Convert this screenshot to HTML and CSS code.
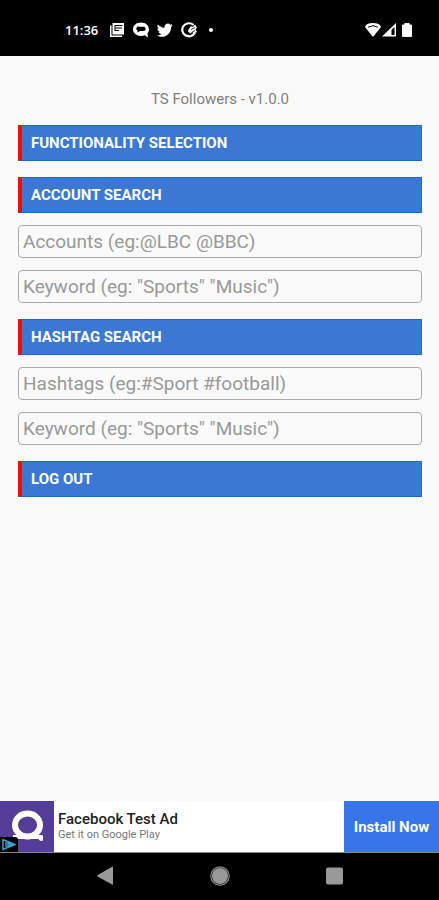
FILE: index.html
```html
<!DOCTYPE html>
<html lang="en">
<head>
<meta charset="utf-8">
<meta name="viewport" content="width=device-width, initial-scale=1">
<title>TS Followers</title>
<link rel="stylesheet" href="styles.css">
</head>
<body>
<header class="status">
  <div class="status-left">
    <span class="clock">11:36</span>
    <svg width="16" height="16" viewBox="0 0 16 16" aria-hidden="true"><path fill="#fff" d="M3.500 1H15v11.500H3.500zM1 3.500h1.500v10H13V15H1z"/><path stroke="#000" d="M6 3.500h7.500M6 6h7M6 8.500h4M6 3v6"/></svg>
    <svg width="18" height="16" viewBox="0 0 18 16" aria-hidden="true"><path fill="#fff" d="M9 .5C4.500.500 1 3.400 1 7.300s3.500 6.700 8 6.700c1.400 0 2.800-.3 4-.8l3 2.300-.5-4.200c1-1 1.500-2.500 1.500-4C17 3.400 13.500.500 9 .500z"/><path d="M7 4.800h4.500a2 2 0 0 1 0 4.200H8L5.500 10.500V8.600A2 2 0 0 1 7 4.800z"/></svg>
    <svg width="16" height="16" viewBox="0 0 24 24" aria-hidden="true"><path fill="#fff" d="M23.600 4.900c-.9.400-1.800.7-2.800.8 1-.6 1.800-1.600 2.100-2.700-.9.600-2 1-3.100 1.200A4.900 4.900 0 0 0 11.400 8.700C7.300 8.500 3.700 6.500 1.300 3.600c-1.300 2.200-.7 5.100 1.500 6.600-.8 0-1.600-.2-2.200-.6 0 2.300 1.600 4.400 3.900 4.900-.7.200-1.500.2-2.200.1.600 2 2.400 3.400 4.600 3.400A9.900 9.900 0 0 1-.4 20c2.200 1.400 4.800 2.200 7.500 2.200 9.100 0 14.300-7.700 14-14.600 1-.7 1.800-1.600 2.500-2.700z"/></svg>
    <svg width="18" height="16" viewBox="0 0 18 16" aria-hidden="true"><path fill="none" stroke="#fff" stroke-width="2.200" d="M13.500 3A6.700 6.500 0 1 0 15 10.500"/><path fill="#fff" d="M8.500 7.500 11 4l1.500 1L15 2.500l2 3-1.500 2L17 10l-3 1.500-2-1.500-1.500 1.500-2.500-2z"/><path stroke="#000" stroke-width=".8" d="M11 7.500l4-2M12 10l3-1.500"/></svg>
    <span class="dot"></span>
  </div>
  <div class="status-right">
    <svg width="16" height="16" viewBox="0 0 16 16" aria-hidden="true"><path fill="#fff" d="M0 5Q1 1 8 1t8 4L8 15z"/><path fill="none" stroke="#000" d="M3 5.200Q8 2.200 13 5.200"/></svg>
    <svg width="16" height="16" viewBox="0 0 16 16" aria-hidden="true"><path fill="#fff" d="M15 1v13.500H1z"/><path d="M13.500 5v8h-3V8z"/></svg>
    <svg class="battery" width="12" height="16" viewBox="0 0 12 16" aria-hidden="true"><path fill="#fff" d="M3.500 1h5v1.500H10q1 0 1 1V14q0 1-1 1H2q-1 0-1-1V3.500q0-1 1-1h1.500z"/></svg>
  </div>
</header>

<main class="content">
  <h1 class="title">TS Followers - v1.0.0</h1>
  <button class="bar" type="button">FUNCTIONALITY SELECTION</button>
  <form class="group">
    <button class="bar" type="button">ACCOUNT SEARCH</button>
    <input class="field" type="text" aria-label="Accounts" placeholder="Accounts (eg:@LBC @BBC)">
    <input class="field" type="text" aria-label="Account keyword" placeholder='Keyword (eg: "Sports" "Music")'>
  </form>
  <form class="group">
    <button class="bar" type="button">HASHTAG SEARCH</button>
    <input class="field" type="text" aria-label="Hashtags" placeholder="Hashtags (eg:#Sport #football)">
    <input class="field" type="text" aria-label="Hashtag keyword" placeholder='Keyword (eg: "Sports" "Music")'>
  </form>
  <button class="bar" type="button">LOG OUT</button>
</main>

<aside class="ad">
  <div class="ad-logo">
    <svg width="54" height="51" viewBox="0 0 54 51" aria-hidden="true"><ellipse cx="27.500" cy="24" rx="12.500" ry="11.500" fill="none" stroke="#fff" stroke-width="6"/><path fill="#fff" d="M13 34h29q1 0 1 2v3q0 1-1.500 1-2 0-3-2H17q-1 2-3 2-1 0-1-2z"/></svg>
    <svg class="ad-mark" width="18" height="15" viewBox="0 0 18 15" aria-hidden="true"><path d="M0 0h15q3 0 3 3v12H0z"/><path fill="none" stroke="#35a9d6" stroke-width="1.400" d="M3 2.500v10L15 7.500zM6 5v5M8 6l3.500 1.500L8 9.500z"/></svg>
  </div>
  <div class="ad-text">
    <strong>Facebook Test Ad</strong>
    <span>Get it on Google Play</span>
  </div>
  <button class="install" type="button">Install Now</button>
</aside>

<nav class="nav" aria-label="System">
  <button type="button" aria-label="Back"><svg width="20" height="20" viewBox="0 0 20 20"><path fill="#999" d="M18 1v17q0 1-1 .5L2.500 10.500q-1-.7 0-1.300L17 .7q1-.5 1 .3z"/></svg></button>
  <button type="button" aria-label="Home"><svg width="20" height="20" viewBox="0 0 20 20"><circle cx="10" cy="10" r="9.200" fill="none" stroke="#888" stroke-width="1.200"/><circle cx="10" cy="10" r="8" fill="#999"/></svg></button>
  <button type="button" aria-label="Recent apps"><svg width="20" height="20" viewBox="0 0 20 20"><rect x="1" y="1.500" width="17" height="17" rx="2" fill="#999"/></svg></button>
</nav>
</body>
</html>
```
FILE: styles.css
```css
* {
  box-sizing: border-box;
}

body {
  margin: 0;
  min-height: 100vh;
  display: flex;
  flex-direction: column;
  background: #fafafa;
  font-family: Roboto, "Liberation Sans", sans-serif;
}

button {
  border: 0;
  margin: 0;
  font-family: inherit;
  cursor: pointer;
}

svg {
  display: block;
}

.status {
  height: 56px;
  padding: 4px 26px 0 65px;
  display: flex;
  align-items: center;
  justify-content: space-between;
  background: #000;
  color: #fff;
}

.status-left {
  display: flex;
  align-items: center;
  gap: 7px;
}

.clock {
  margin-right: 4px;
  font: 600 13px/16px "Open Sans", Roboto, sans-serif;
}

.dot {
  width: 4px;
  height: 4px;
  margin-left: 4px;
  border-radius: 50%;
  background: #fff;
}

.status-right {
  display: flex;
  align-items: center;
}

.battery {
  margin-left: 4px;
}

.content {
  flex: 1;
  padding: 34px 17px 16px 18px;
  display: flex;
  flex-direction: column;
  gap: 16px;
}

.title {
  margin: 0;
  color: #808080;
  font-size: 15px;
  line-height: 19px;
  font-weight: 400;
  text-align: center;
}

.group {
  display: flex;
  flex-direction: column;
  gap: 12px;
}

.bar {
  width: 100%;
  height: 36px;
  padding: 0 9px;
  border: 1px solid #1e68cd;
  border-left: 4px solid #e81010;
  background: #3a78d3;
  color: #fff;
  font-size: 15px;
  line-height: 20px;
  font-weight: 700;
  text-align: left;
}

.field {
  width: 100%;
  height: 33px;
  padding: 0 4px;
  border: 1px solid #aaa;
  border-radius: 4px;
  background: #fafafa;
  color: #333;
  font-family: inherit;
  font-size: 19px;
}

.field::placeholder {
  color: #999;
  opacity: 1;
}

.ad {
  height: 52px;
  display: flex;
  border-bottom: 1px solid #888;
  background: #fff;
}

.ad-logo {
  position: relative;
  width: 54px;
  background: #543d99;
}

.ad-mark {
  position: absolute;
  left: 0;
  bottom: 0;
}

.ad-text {
  flex: 1;
  padding: 0 0 2px 4px;
  display: flex;
  flex-direction: column;
  justify-content: center;
}

.ad-text strong {
  color: #222;
  font-size: 15px;
  line-height: 18px;
  font-weight: 500;
}

.ad-text span {
  color: #777;
  font-size: 11px;
  line-height: 14px;
}

.install {
  width: 95px;
  padding: 0;
  background: #3975ea;
  color: #fff;
  font-size: 15px;
  font-weight: 700;
}

.nav {
  height: 47px;
  padding: 0 47px 2px;
  display: flex;
  align-items: center;
  justify-content: space-around;
  background: #000;
}

.nav button {
  padding: 8px;
  background: none;
}
```
